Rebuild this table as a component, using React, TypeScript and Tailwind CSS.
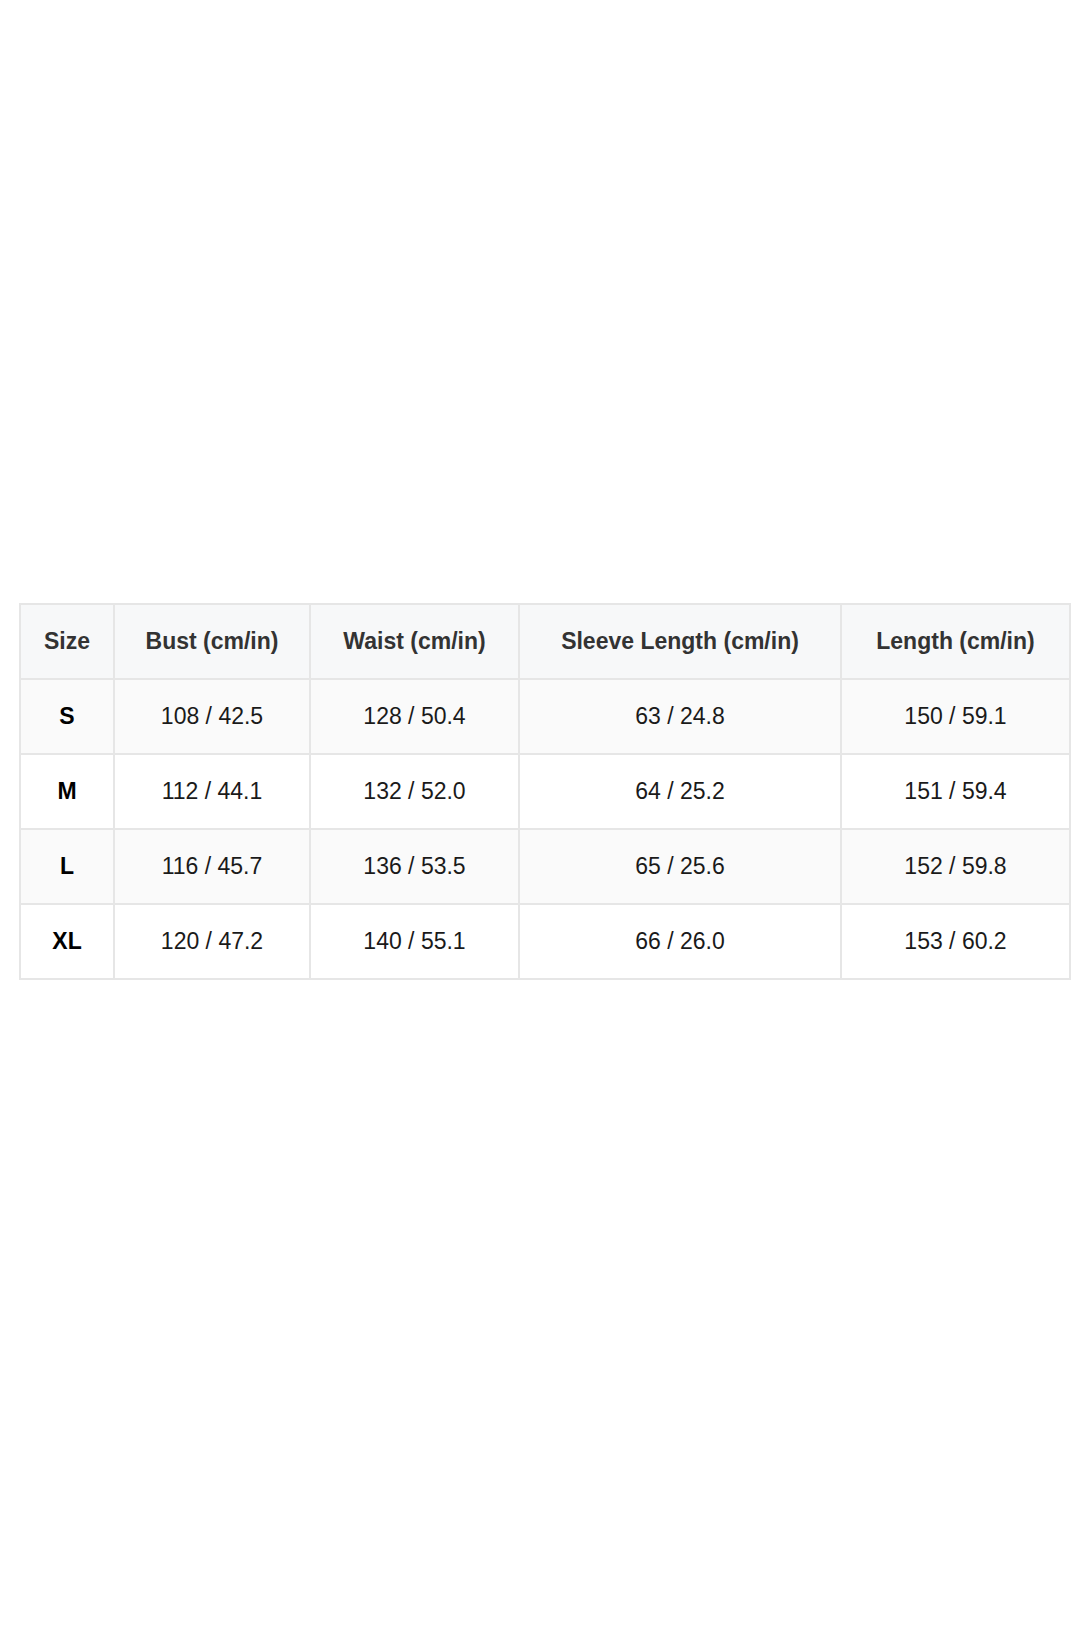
const headers = ["Size", "Bust (cm/in)", "Waist (cm/in)", "Sleeve Length (cm/in)", "Length (cm/in)"];

const rows = [
  ["S", "108 / 42.5", "128 / 50.4", "63 / 24.8", "150 / 59.1"],
  ["M", "112 / 44.1", "132 / 52.0", "64 / 25.2", "151 / 59.4"],
  ["L", "116 / 45.7", "136 / 53.5", "65 / 25.6", "152 / 59.8"],
  ["XL", "120 / 47.2", "140 / 55.1", "66 / 26.0", "153 / 60.2"],
];

const widths = ["w-[94px]", "w-[196px]", "w-[209px]", "w-[322px]", "w-[229px]"];

export default function App() {
  return (
    <div className="min-h-[1632px] bg-white pt-[603px] pl-[19px] font-['Liberation_Sans',Arial,sans-serif]">
      <table className="w-[1050px] table-fixed border-collapse border-2 border-[#e6e6e6]">
        <thead>
          <tr className="h-[75px] bg-[#f7f8f9]">
            {headers.map((h, i) => (
              <th key={h} className={`${widths[i]} border-2 border-[#e6e6e6] text-center text-[23px] font-bold text-[#333]`}>
                {h}
              </th>
            ))}
          </tr>
        </thead>
        <tbody>
          {rows.map((r, ri) => (
            <tr key={r[0]} className={ri % 2 === 0 ? "h-[75px] bg-[#fafafa]" : "h-[75px] bg-white"}>
              {r.map((c, ci) => (
                <td
                  key={ci}
                  className={
                    ci === 0
                      ? "border-2 border-[#e6e6e6] text-center text-[23px] font-bold text-black"
                      : "border-2 border-[#e6e6e6] text-center text-[23px] text-[#1a1a1a]"
                  }
                >
                  {c}
                </td>
              ))}
            </tr>
          ))}
        </tbody>
      </table>
    </div>
  );
}
